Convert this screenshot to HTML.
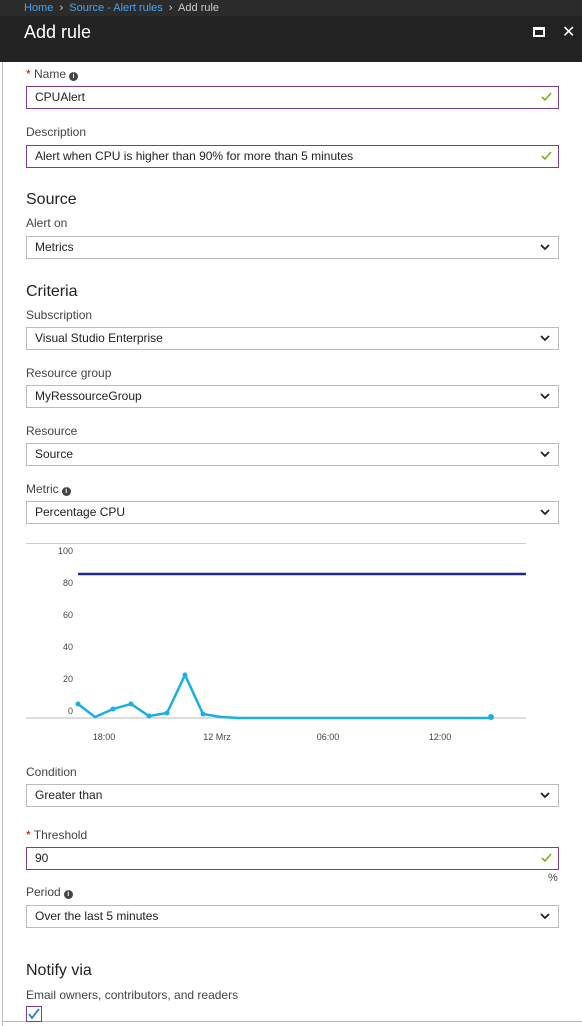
<!DOCTYPE html>
<html><head><meta charset="utf-8"><style>
*{margin:0;padding:0;box-sizing:border-box}
body{width:582px;height:1026px;background:#fff;font-family:"Liberation Sans",sans-serif;position:relative;overflow:hidden;color:#333}
.bc{position:absolute;left:0;top:0;width:582px;height:16px;background:#2b2b2b;font-size:11px;color:#ccc;padding-left:24px;line-height:16px}
.bc a{color:#4aa3f0;text-decoration:none}
.hd{position:absolute;left:0;top:16px;width:582px;height:46px;background:#222;}
.hd .t{position:absolute;left:24px;top:6px;color:#fff;font-size:18px}
.lb{position:absolute;left:26px;font-size:12px;color:#444}
.st{color:#c00}
.h{position:absolute;left:26px;font-size:16px;color:#222}
.in{position:absolute;left:26px;width:533px;height:23px;border:1px solid #7a3f8f;font-size:12px;line-height:21px;padding-left:8px;color:#222}
.sel{position:absolute;left:26px;width:533px;height:23px;border:1px solid #bbb;font-size:12px;line-height:21px;padding-left:8px;color:#222}
.ck{position:absolute;right:6px;top:4px}
.dd{position:absolute;right:8px;top:7px}
.i{display:inline-block;width:9px;height:9px;border-radius:50%;background:#444;color:#fff;font-size:7px;line-height:9px;text-align:center;font-weight:bold;vertical-align:0px;margin-left:3px}
</style></head><body>
<div style="position:absolute;left:2px;top:62px;width:1px;height:964px;background:#bbb"></div>
<div style="position:absolute;left:2px;top:1021px;width:580px;height:1px;background:#bbb"></div>
<div class="bc"><a>Home</a> &nbsp;›&nbsp; <a>Source - Alert rules</a> &nbsp;›&nbsp; Add rule</div>
<div class="hd"><div class="t">Add rule</div>
<div style="position:absolute;left:533px;top:11px;width:12px;height:10px;border:2px solid #fff;border-top-width:3px"></div>
<div style="position:absolute;left:562px;top:6px;color:#fff;font-size:16px">✕</div></div>

<div class="lb" style="top:67px"><span class="st">*</span> Name<span class="i">i</span></div>
<div class="in" style="top:86px">CPUAlert<svg class="ck" width="12" height="12"><path d="M2 6l3 3 6-7" stroke="#7ab317" stroke-width="1.6" fill="none"/></svg></div>
<div class="lb" style="top:125px">Description</div>
<div class="in" style="top:145px">Alert when CPU is higher than 90% for more than 5 minutes<svg class="ck" width="12" height="12"><path d="M2 6l3 3 6-7" stroke="#7ab317" stroke-width="1.6" fill="none"/></svg></div>

<div class="h" style="top:191px">Source</div>
<div class="lb" style="top:216px">Alert on</div>
<div class="sel" style="top:236px">Metrics<svg class="dd" width="10" height="7"><path d="M1 1l4 4 4-4" stroke="#222" stroke-width="1.8" fill="none"/></svg></div>

<div class="h" style="top:283px">Criteria</div>
<div class="lb" style="top:308px">Subscription</div>
<div class="sel" style="top:327px">Visual Studio Enterprise<svg class="dd" width="10" height="7"><path d="M1 1l4 4 4-4" stroke="#222" stroke-width="1.8" fill="none"/></svg></div>
<div class="lb" style="top:366px">Resource group</div>
<div class="sel" style="top:385px">MyRessourceGroup<svg class="dd" width="10" height="7"><path d="M1 1l4 4 4-4" stroke="#222" stroke-width="1.8" fill="none"/></svg></div>
<div class="lb" style="top:424px">Resource</div>
<div class="sel" style="top:443px">Source<svg class="dd" width="10" height="7"><path d="M1 1l4 4 4-4" stroke="#222" stroke-width="1.8" fill="none"/></svg></div>
<div class="lb" style="top:482px">Metric<span class="i">i</span></div>
<div class="sel" style="top:501px">Percentage CPU<svg class="dd" width="10" height="7"><path d="M1 1l4 4 4-4" stroke="#222" stroke-width="1.8" fill="none"/></svg></div>

<svg style="position:absolute;left:0;top:530px" width="582" height="220">
<g font-family="Liberation Sans" font-size="9" fill="#444" text-anchor="end">
<text x="73" y="24">100</text><text x="73" y="56">80</text><text x="73" y="88">60</text><text x="73" y="120">40</text><text x="73" y="152">20</text><text x="73" y="184">0</text></g>
<line x1="26" y1="13.5" x2="526" y2="13.5" stroke="#ccc"/>
<line x1="26" y1="188" x2="526" y2="188" stroke="#bbb"/>
<line x1="78" y1="44" x2="526" y2="44" stroke="#1a2b8a" stroke-width="2.5"/>
<g font-family="Liberation Sans" font-size="9" fill="#444" text-anchor="middle">
<text x="104" y="210">18:00</text><text x="217" y="210">12 Mrz</text><text x="328" y="210">06:00</text><text x="440" y="210">12:00</text></g>
<polyline fill="none" stroke="#1ab0e6" stroke-width="2.5" points="78,174 95,187 113,179 131,174 149,186 167,183 185,145 203,184 221,187 239,188 491,188"/>
<g fill="#1ab0e6"><circle cx="78" cy="174" r="2.5"/><circle cx="113" cy="179" r="2.5"/><circle cx="131" cy="174" r="2.5"/><circle cx="149" cy="186" r="2.5"/><circle cx="167" cy="183" r="2.5"/><circle cx="185" cy="145" r="2.5"/><circle cx="203" cy="184" r="2.5"/><circle cx="491" cy="187" r="3"/></g>
</svg>

<div class="lb" style="top:765px">Condition</div>
<div class="sel" style="top:784px">Greater than<svg class="dd" width="10" height="7"><path d="M1 1l4 4 4-4" stroke="#222" stroke-width="1.8" fill="none"/></svg></div>
<div class="lb" style="top:828px"><span class="st">*</span> Threshold</div>
<div class="in" style="top:847px">90<svg class="ck" width="12" height="12"><path d="M2 6l3 3 6-7" stroke="#7ab317" stroke-width="1.6" fill="none"/></svg></div>
<div class="lb" style="top:872px;left:548px;font-size:11px">%</div>
<div class="lb" style="top:885px">Period<span class="i">i</span></div>
<div class="sel" style="top:905px">Over the last 5 minutes<svg class="dd" width="10" height="7"><path d="M1 1l4 4 4-4" stroke="#222" stroke-width="1.8" fill="none"/></svg></div>
<div class="h" style="top:962px">Notify via</div>
<div class="lb" style="top:988px">Email owners, contributors, and readers</div>
<div style="position:absolute;left:26px;top:1006px;width:16px;height:16px;border:1px solid #7a3f8f;background:#fff"><svg width="14" height="14"><path d="M2 7l3 4 7-9" stroke="#1a7fd4" stroke-width="1.8" fill="none"/></svg></div>
</body></html>
